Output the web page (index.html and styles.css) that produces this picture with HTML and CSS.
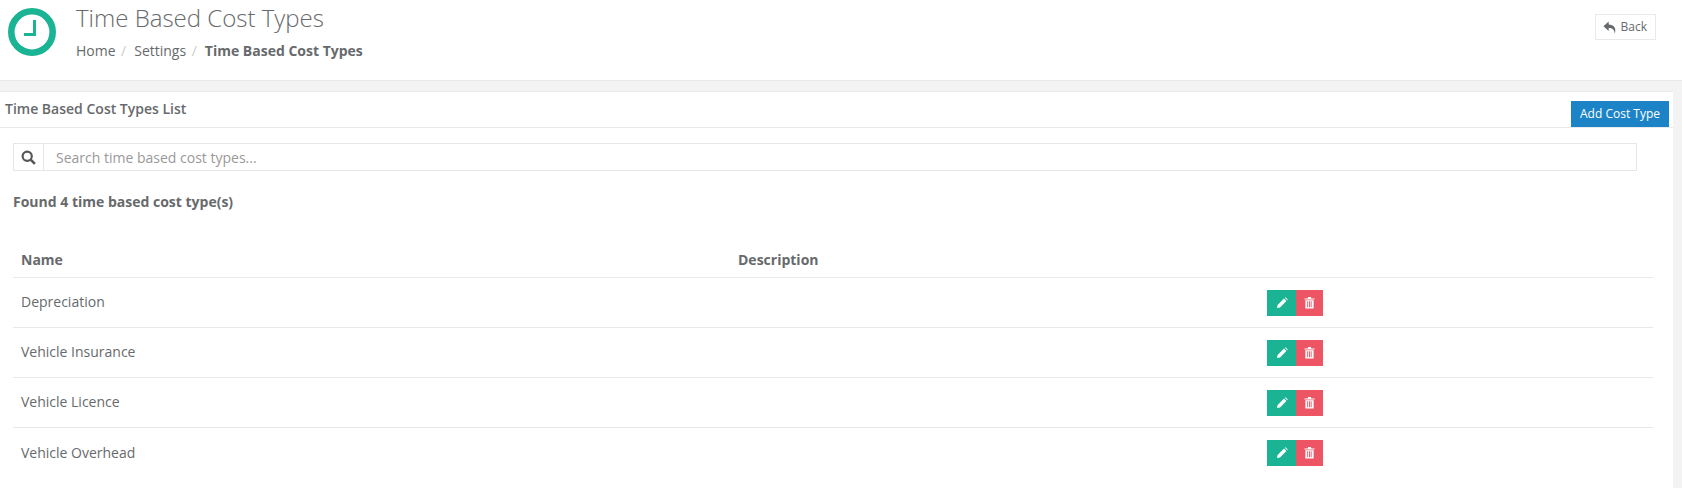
FILE: index.html
```html
<!DOCTYPE html>
<html lang="en">
<head>
<meta charset="utf-8">
<title>Time Based Cost Types</title>
<link rel="stylesheet" href="styles.css">
</head>
<body>
<header class="page-head">
  <svg class="logo" viewBox="0 0 48 48" width="48" height="48"><circle cx="24" cy="24" r="20.7" fill="#fff" stroke="#1ab394" stroke-width="6.600"/><path d="M26.500 12v14.500H16" fill="none" stroke="#1ab394" stroke-width="3"/></svg>
  <div class="head-text">
    <h1>Time Based Cost Types</h1>
    <nav class="crumbs"><span>Home</span><i>/</i><span>Settings</span><i>/</i><b>Time Based Cost Types</b></nav>
  </div>
  <a class="back"><svg viewBox="0 0 16 14" width="14" height="13"><path d="M6.500 0 .5 5.500l6 5.500V7.500c4 0 6.500 1.500 7 6.500 2-6.500-1-10.500-7-10.500z" fill="#676a6c"/></svg>Back</a>
</header>
<div class="band"></div>
<main class="panel">
  <div class="panel-title"><h2>Time Based Cost Types List</h2><a class="add">Add Cost Type</a></div>
  <div class="panel-body">
    <div class="search">
      <span class="addon"><svg viewBox="0 0 14 14" width="15" height="15"><circle cx="5.800" cy="5.800" r="4.300" fill="none" stroke="#555" stroke-width="2"/><path d="m9 9 4 4" stroke="#555" stroke-width="2.400"/></svg></span>
      <input type="text" placeholder="Search time based cost types...">
    </div>
    <p class="found">Found 4 time based cost type(s)</p>
    <table>
      <thead><tr><th class="c1">Name</th><th class="c2">Description</th><th></th></tr></thead>
      <tbody>
        <tr><td>Depreciation</td><td></td><td><span class="btns"><a class="edit"><svg viewBox="0 0 12 12" width="12" height="12"><path d="M1 11l.6-3L8 1.600 10.400 4 4 10.400zM8.800.8l.7-.6 2.300 2.300-.6.700z" fill="#fff"/></svg></a><a class="del"><svg viewBox="0 0 12 13" width="11" height="13"><path d="M.5 2h3.500l.5-1.500h3L8 2h3.500v1.300H.5zM1.500 4h9v9h-9zm2 1.200v6.600h1V5.200zm3.800 0v6.600h1V5.200zM5.500 5.200v6.600h1V5.200z" fill="#fff" fill-rule="evenodd"/></svg></a></span></td></tr>
        <tr><td>Vehicle Insurance</td><td></td><td><span class="btns"><a class="edit"><svg viewBox="0 0 12 12" width="12" height="12"><path d="M1 11l.6-3L8 1.600 10.400 4 4 10.400zM8.800.8l.7-.6 2.300 2.300-.6.700z" fill="#fff"/></svg></a><a class="del"><svg viewBox="0 0 12 13" width="11" height="13"><path d="M.5 2h3.500l.5-1.500h3L8 2h3.500v1.300H.5zM1.500 4h9v9h-9zm2 1.200v6.600h1V5.200zm3.800 0v6.600h1V5.200zM5.500 5.200v6.600h1V5.200z" fill="#fff" fill-rule="evenodd"/></svg></a></span></td></tr>
        <tr><td>Vehicle Licence</td><td></td><td><span class="btns"><a class="edit"><svg viewBox="0 0 12 12" width="12" height="12"><path d="M1 11l.6-3L8 1.600 10.400 4 4 10.400zM8.800.8l.7-.6 2.300 2.300-.6.700z" fill="#fff"/></svg></a><a class="del"><svg viewBox="0 0 12 13" width="11" height="13"><path d="M.5 2h3.500l.5-1.500h3L8 2h3.500v1.300H.5zM1.500 4h9v9h-9zm2 1.200v6.600h1V5.200zm3.800 0v6.600h1V5.200zM5.500 5.200v6.600h1V5.200z" fill="#fff" fill-rule="evenodd"/></svg></a></span></td></tr>
        <tr><td>Vehicle Overhead</td><td></td><td><span class="btns"><a class="edit"><svg viewBox="0 0 12 12" width="12" height="12"><path d="M1 11l.6-3L8 1.600 10.400 4 4 10.400zM8.800.8l.7-.6 2.300 2.300-.6.700z" fill="#fff"/></svg></a><a class="del"><svg viewBox="0 0 12 13" width="11" height="13"><path d="M.5 2h3.500l.5-1.500h3L8 2h3.500v1.300H.5zM1.500 4h9v9h-9zm2 1.200v6.600h1V5.200zm3.800 0v6.600h1V5.200zM5.500 5.200v6.600h1V5.200z" fill="#fff" fill-rule="evenodd"/></svg></a></span></td></tr>
      </tbody>
    </table>
  </div>
</main>
</body>
</html>
```
FILE: styles.css
```css
* { box-sizing: border-box; }
html, body { margin: 0; height: 100%; }
body { background: #f3f3f4; color: #676a6c; font: 13px/1.43 "Open Sans", sans-serif; overflow: hidden; display: flex; flex-direction: column; }
.page-head { height: 81px; flex: none; background: #fff; display: flex; align-items: flex-start; padding: 8px 0 0 8px; border-bottom: 1px solid #e7eaec; }
.logo { flex: none; }
.head-text { margin-left: 20px; flex: 1; margin-top: -9px; }
h1 { margin: 0; font-size: 24px; font-weight: 300; line-height: 38px; }
.crumbs { display: flex; font-size: 14px; margin-top: 4px; line-height: 20px; }
.crumbs i { font-style: normal; color: #ccc; margin: 0 8px 0 5.500px; }
.crumbs b { font-weight: 700; }
.back { display: flex; align-items: center; gap: 4px; height: 26px; padding: 0 8px 0 7px; border: 1px solid #e7eaec; font-size: 12px; margin: 6px 26px 0 0; }
.band { height: 10px; flex: none; }
.panel { flex: 1; background: #fff; border-top: 1px solid #e7eaec; margin-right: 9px; }
.panel-title { height: 36px; display: flex; justify-content: space-between; align-items: flex-end; padding: 0 4px 0 5px; border-bottom: 1px solid #e7eaec; }
h2 { margin: 0; font-size: 14px; font-weight: 600; line-height: 20px; align-self: flex-start; margin-top: 7px; }
.add { background: #1c84c6; color: #fff; font-size: 12px; height: 26px; line-height: 26px; width: 98px; text-align: center; }
.panel-body { padding: 15px 0 0 13px; }
.search { display: flex; height: 28px; width: 1624px; border: 1px solid #e5e6e7; }
.addon { width: 30px; display: flex; align-items: center; justify-content: center; border-right: 1px solid #e5e6e7; }
.search input { flex: 1; border: 0; padding: 0 12px; font: 14px "Open Sans", sans-serif; outline: 0; }
.search input::placeholder { color: #999; }
.found { margin: 21px 0 0; font-weight: 700; font-size: 14px; line-height: 20px; }
table { margin-top: 24px; width: 1640px; border-collapse: collapse; table-layout: fixed; font-size: 14px; }
th { text-align: left; font-weight: 700; padding: 0 8px 6px; height: 41px; vertical-align: bottom; border-bottom: 1px solid #e7eaec; }
td { height: 50px; padding: 1px 8px 0; border-bottom: 1px solid #e7eaec; }
tr:last-child td { border-bottom: 0; }
.c1 { width: 717px; }
.c2 { width: 529px; }
.btns { display: flex; }
.btns a { display: flex; align-items: center; justify-content: center; height: 26px; }
.edit { width: 29px; background: #1ab394; }
.del { width: 27px; background: #ed5565; }
```
